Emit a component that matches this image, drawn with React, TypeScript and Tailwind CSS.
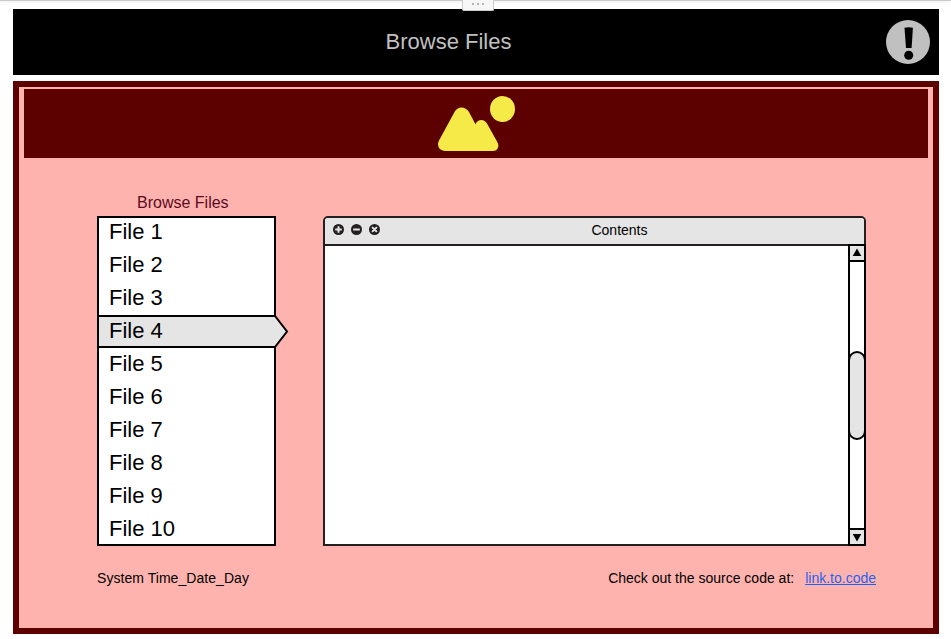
const files = Array.from({ length: 10 }, (_, i) => `File ${i + 1}`);
const selected = 3;

function TopBar() {
  return (
    <header className="relative flex h-[66px] items-center justify-center bg-black">
      <h1 className="mr-[55px] text-[22px] leading-[26px] text-[#c0c0c0]">Browse Files</h1>
      <svg className="absolute right-[9px] top-[11px]" width="44" height="44" viewBox="0 0 44 44">
        <circle cx="22" cy="22" r="22" fill="#c0c0c0" />
        <path d="M18.5 7.8 Q22.7 6.6 26.9 7.8 L25.6 28 H20 Z" fill="#000" />
        <circle cx="22.7" cy="35.3" r="4.5" fill="#000" />
      </svg>
    </header>
  );
}

function Banner() {
  return (
    <div className="mx-[5px] mt-[2px] flex h-[69px] justify-center bg-[#5c0000]">
      <svg className="mt-[7px]" width="77" height="56" viewBox="0 0 77 56" fill="#f5ea48">
        <path d="M1 44.5 L16.5 16 Q19 11.5 23.5 11.5 Q28 11.5 31 16 L37.5 28.2 Q39.5 24 43.5 24 Q46.8 24 49 27.5 L59.3 46 Q61 49 60 51.5 Q59 55 54.5 55 H8 Q2.5 55 0.7 51.2 Q-0.8 48 1 44.5 Z" />
        <ellipse cx="64.5" cy="13" rx="12.5" ry="13" />
      </svg>
    </div>
  );
}

function FileList() {
  return (
    <ul className="relative h-[330px] w-[179px] bg-white shadow-[inset_0_0_0_2px_#000]">
      {files.map((name, i) => (
        <li key={name} className="relative flex h-[33px] items-center pl-3 text-[22px] leading-[26px] text-black">
          {i === selected && (
            <svg className="absolute left-0 top-0" width="192" height="33" viewBox="0 0 192 33">
              <path d="M1 1 H178 L190 16.5 L178 32 H1 Z" fill="#e5e5e5" stroke="#000" strokeWidth="2" />
            </svg>
          )}
          <span className="relative -top-px">{name}</span>
        </li>
      ))}
    </ul>
  );
}

function WindowButtons() {
  return (
    <svg className="absolute left-[8px] top-[6px]" width="48" height="11" viewBox="0 0 48 11">
      <g fill="#231f20">
        <circle cx="5.5" cy="5.5" r="5.5" />
        <circle cx="23.5" cy="5.5" r="5.5" />
        <circle cx="41.5" cy="5.5" r="5.5" />
      </g>
      <path
        d="M2.2 5.5 H8.8 M5.5 2.2 V8.8 M20.2 5.5 H26.8 M39.1 3.1 L43.9 7.9 M43.9 3.1 L39.1 7.9"
        stroke="#e5e5e5"
        strokeWidth="2"
      />
    </svg>
  );
}

function Scrollbar() {
  return (
    <div className="relative -mb-[2px] -mr-[2px] -mt-[2px] flex w-[18px] flex-col justify-between border-2 border-black bg-white">
      <div className="flex h-4 justify-center border-b-2 border-black bg-[#e5e5e5]">
        <svg width="10" height="14" viewBox="0 0 10 14">
          <path d="M5 2.5 L9.3 10 H0.7 Z" />
        </svg>
      </div>
      <div className="absolute -left-[2px] top-[105px] h-[89px] w-[18px] rounded-[9px] border-2 border-black bg-[#e5e5e5]" />
      <div className="flex h-4 justify-center border-t-2 border-black bg-[#e5e5e5]">
        <svg width="10" height="14" viewBox="0 0 10 14">
          <path d="M5 11.5 L9.3 4 H0.7 Z" />
        </svg>
      </div>
    </div>
  );
}

function ContentsWindow() {
  return (
    <section className="ml-[47px] flex h-[330px] w-[543px] flex-col rounded-t-[5px] border-2 border-[#231f20] bg-white">
      <div className="relative flex h-[28px] shrink-0 justify-center rounded-t-[3px] border-b-2 border-[#231f20] bg-[#e5e5e5]">
        <WindowButtons />
        <h2 className="ml-[50px] mt-1 text-sm leading-4 text-black">Contents</h2>
      </div>
      <div className="flex flex-1 justify-end">
        <Scrollbar />
      </div>
    </section>
  );
}

export default function App() {
  return (
    <div className="relative h-[639px] w-[951px] overflow-hidden bg-white pl-[13px] pr-[12px] font-['Liberation_Sans',Arial,sans-serif]">
      <div className="absolute inset-x-0 top-0 h-px bg-[#cacaca] shadow-[0_1px_3px_#ddd]" />
      <div className="pt-[9px]">
        <TopBar />
      </div>
      <div className="absolute left-[462px] top-0 flex h-[11px] w-[32px] justify-center gap-[3px] rounded-b-[2px] border border-t-0 border-[#cacaca] bg-[#f7f7f7] pt-[3px]">
        <i className="size-[2px] bg-[#b4b4b4]" />
        <i className="size-[2px] bg-[#b4b4b4]" />
        <i className="size-[2px] bg-[#b4b4b4]" />
      </div>
      <main className="mt-[6px] flex h-[553px] flex-col border-[6px] border-[#5c0000] bg-[#ffb3ae]">
        <Banner />
        <p className="ml-[118px] mt-[36px] text-base leading-[18px] text-[#5c0a22]">Browse Files</p>
        <div className="ml-[78px] mt-[4px] flex">
          <FileList />
          <ContentsWindow />
        </div>
        <footer className="ml-[78px] mr-[57px] mt-6 flex text-sm leading-4 text-black">
          <span className="tracking-[0.05px]">System Time_Date_Day</span>
          <span className="ml-auto mr-[11px]">Check out the source code at:</span>
          <a className="text-[#1f62f0] underline" href="#code">link.to.code</a>
        </footer>
      </main>
    </div>
  );
}
